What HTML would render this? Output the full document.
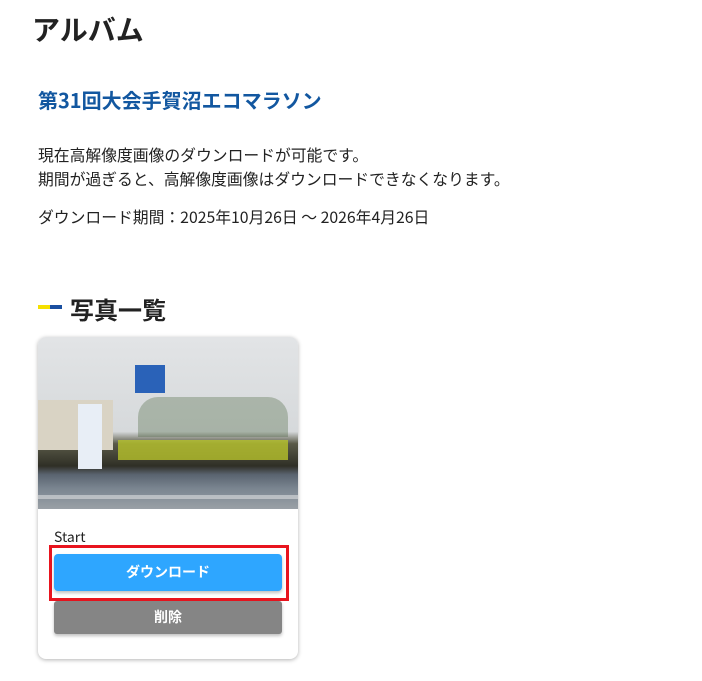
<!DOCTYPE html>
<html><head><meta charset="utf-8"><style>
body{margin:0;background:#fff;font-family:"Noto Sans CJK JP","Liberation Sans",sans-serif;color:#222;width:702px;height:681px;overflow:hidden;position:relative}
.a{position:absolute;white-space:nowrap}
</style></head><body>
<div class="a" style="left:32px;top:10px;font-size:28px;font-weight:bold;line-height:38px">アルバム</div>
<div class="a" style="left:38px;top:86px;font-size:20px;font-weight:bold;color:#1257a0;line-height:28px">第31回大会手賀沼エコマラソン</div>
<div class="a" style="left:38px;top:143px;font-size:15.8px;line-height:24px">現在高解像度画像のダウンロードが可能です。<br>期間が過ぎると、高解像度画像はダウンロードできなくなります。</div>
<div class="a" style="left:38px;top:205px;font-size:15.8px;line-height:24px">ダウンロード期間：2025年10月26日 〜 2026年4月26日</div>
<div class="a" style="left:38px;top:305px;width:12px;height:4px;background:#f5e000"></div>
<div class="a" style="left:50px;top:305px;width:12px;height:4px;background:#1a4fa0"></div>
<div class="a" style="left:70px;top:293px;font-size:24px;font-weight:bold;line-height:32px">写真一覧</div>
<div class="a" style="left:38px;top:337px;width:260px;height:322px;border-radius:8px;box-shadow:0 1px 4px rgba(0,0,0,.3);overflow:hidden;background:#fff">
 <div style="position:absolute;left:0;top:0;width:260px;height:172px;background:linear-gradient(#e2e4e6 0%,#d6d9db 55%,#5a5a48 62%,#2f2f26 75%,#5a6470 80%,#7a8590 88%,#9aa0a6 100%)"></div>
 <div style="position:absolute;left:97px;top:28px;width:30px;height:28px;background:#2a62b8"></div>
 <div style="position:absolute;left:0;top:63px;width:75px;height:50px;background:#d9d3c4"></div>
 <div style="position:absolute;left:40px;top:67px;width:24px;height:65px;background:#e8eef6"></div>
 <div style="position:absolute;left:100px;top:60px;width:150px;height:40px;background:#3b5a2e;opacity:.3;border-radius:20px 20px 0 0"></div>
 <div style="position:absolute;left:80px;top:103px;width:170px;height:20px;background:#b6c22a;opacity:.8"></div>
 <div style="position:absolute;left:0;top:158px;width:260px;height:4px;background:#eee;opacity:.5"></div>
 <div class="a" style="left:16px;top:190px;font-size:14px;line-height:20px">Start</div>
</div>
<div class="a" style="left:49px;top:545px;width:234px;height:50px;border:3px solid #e8141e"></div>
<div class="a" style="left:54px;top:554px;width:228px;height:37px;background:#2ea6ff;border-radius:4px;box-shadow:0 2px 3px rgba(0,0,0,.25);color:#fff;font-weight:bold;font-size:14px;text-align:center;line-height:37px">ダウンロード</div>
<div class="a" style="left:54px;top:601px;width:228px;height:33px;background:#858585;border-radius:3px;box-shadow:0 2px 3px rgba(0,0,0,.25);color:#fff;font-weight:bold;font-size:14px;text-align:center;line-height:33px">削除</div>
</body></html>
